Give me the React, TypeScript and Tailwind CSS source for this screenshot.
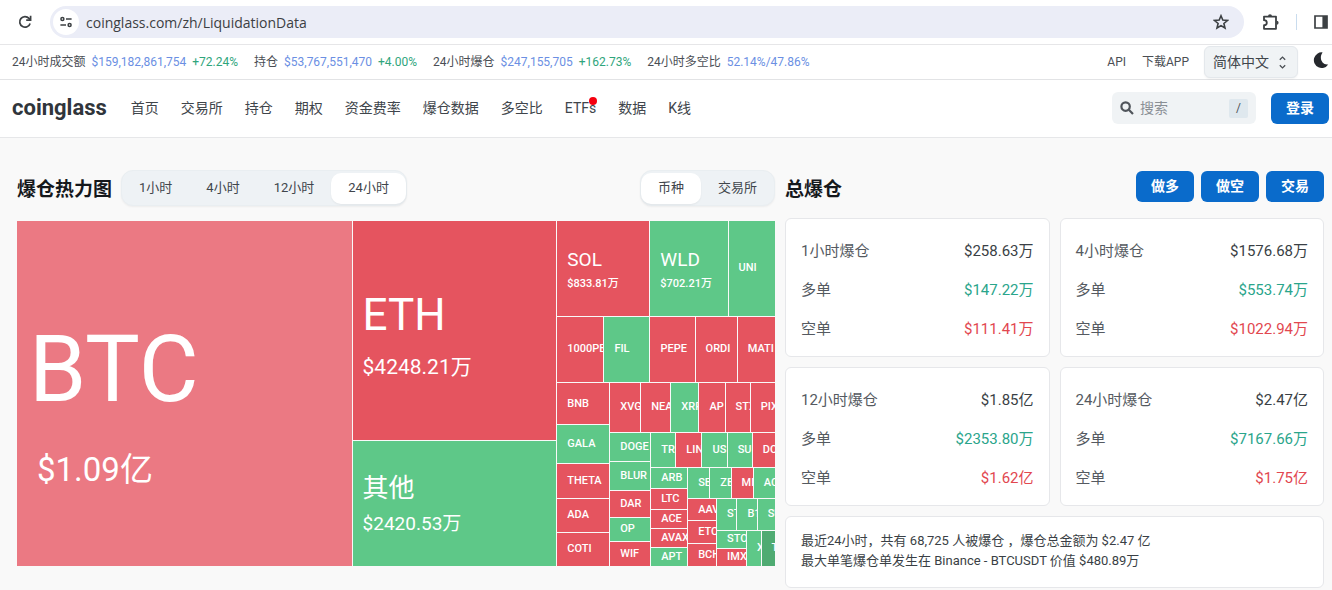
import React from "react";

type Tone = "soft" | "down" | "up" | "deep";
type Scale = "xl" | "lg" | "md" | "sm" | "xs";
type Leaf = { size: number; name: string; tone: Tone; value?: string; scale?: Scale };
type Branch = { size: number; dir: "row" | "col"; items: TreeNode[] };
type TreeNode = Leaf | Branch;

const leaf = (size: number, name: string, tone: Tone, value?: string, scale?: Scale): Leaf => ({
  size,
  name,
  tone,
  value,
  scale,
});
const row = (size: number, ...items: TreeNode[]): Branch => ({ size, dir: "row", items });
const col = (size: number, ...items: TreeNode[]): Branch => ({ size, dir: "col", items });

const heatmap: Branch = row(
  1,
  leaf(335, "BTC", "soft", "$1.09亿", "xl"),
  col(204, leaf(220, "ETH", "down", "$4248.21万", "lg"), leaf(125, "其他", "up", "$2420.53万", "md")),
  col(
    218,
    row(
      95,
      leaf(93, "SOL", "down", "$833.81万", "sm"),
      leaf(78, "WLD", "up", "$702.21万", "sm"),
      leaf(47, "UNI", "up"),
    ),
    row(
      65,
      leaf(47, "1000PE", "down"),
      leaf(46, "FIL", "up"),
      leaf(45, "PEPE", "down"),
      leaf(42, "ORDI", "down"),
      leaf(38, "MATI", "down"),
    ),
    row(
      184,
      col(
        52,
        leaf(43, "BNB", "down"),
        leaf(38, "GALA", "up"),
        leaf(35, "THETA", "down"),
        leaf(34, "ADA", "down"),
        leaf(34, "COTI", "down"),
      ),
      col(
        165,
        row(
          50,
          leaf(31, "XVG", "down"),
          leaf(30, "NEA", "down"),
          leaf(28, "XRP", "up"),
          leaf(26, "AP", "down"),
          leaf(25, "STX", "down"),
          leaf(25, "PIX", "down"),
        ),
        row(
          133,
          col(
            40,
            leaf(29, "DOGE", "up"),
            leaf(29, "BLUR", "up"),
            leaf(26, "DAR", "down"),
            leaf(24, "OP", "up"),
            leaf(25, "WIF", "down"),
          ),
          col(
            124,
            row(
              34,
              leaf(25, "TRB", "up"),
              leaf(26, "LIN", "down"),
              leaf(25, "US", "up"),
              leaf(25, "SU", "up"),
              leaf(23, "DO", "down"),
            ),
            row(
              98,
              col(
                36,
                leaf(21, "ARB", "up"),
                leaf(20, "LTC", "down"),
                leaf(19, "ACE", "down"),
                leaf(19, "AVAX", "down"),
                leaf(19, "APT", "up"),
              ),
              col(
                87,
                row(
                  30,
                  leaf(22, "SE", "up"),
                  leaf(21, "ZE", "up"),
                  leaf(22, "MI", "down"),
                  leaf(22, "AC", "up"),
                ),
                row(
                  67,
                  col(28, leaf(22, "AAV", "down"), leaf(22, "ETC", "down"), leaf(23, "BCH", "down")),
                  col(
                    58,
                    row(31, leaf(20, "ST", "up"), leaf(20, "B1", "up"), leaf(18, "SU", "up")),
                    row(
                      36,
                      col(30, leaf(18, "STO", "up"), leaf(18, "IMX", "down")),
                      leaf(14, "X", "up"),
                      leaf(14, "T", "deep"),
                    ),
                  ),
                ),
              ),
            ),
          ),
        ),
      ),
    ),
  ),
);

const tones: Record<Tone, string> = {
  soft: "bg-[#eb7983]",
  down: "bg-[#e5545f]",
  up: "bg-[#5ec888]",
  deep: "bg-[#4fab72]",
};

const scales: Record<Scale, { name: string; value: string }> = {
  xl: { name: "mt-5 pl-3 text-[92px] leading-[104px]", value: "mt-7 pl-5 text-[33px] leading-10" },
  lg: { name: "mt-2 pl-[10px] text-[44px] leading-[52px]", value: "mt-3 pl-[10px] text-[21px] leading-7" },
  md: { name: "pl-[10px] text-[26px] leading-8", value: "mt-2 pl-[10px] text-[19px] leading-6" },
  sm: {
    name: "mt-1 pl-[10px] text-[19px] leading-6",
    value: "mt-1 pl-[10px] text-[11px] leading-4 font-medium",
  },
  xs: { name: "pl-[10px] text-[11px] leading-4 font-medium", value: "" },
};

function Cell({ node }: { node: TreeNode }) {
  const style = { flexGrow: node.size };
  if ("items" in node) {
    return (
      <div
        style={style}
        className={`flex min-h-0 min-w-0 basis-0 gap-px ${node.dir === "row" ? "flex-row" : "flex-col"}`}
      >
        {node.items.map((child, i) => (
          <Cell key={i} node={child} />
        ))}
      </div>
    );
  }
  const scale = scales[node.scale ?? "xs"];
  return (
    <div
      style={style}
      className={`flex min-h-0 min-w-0 basis-0 flex-col justify-center overflow-hidden whitespace-nowrap text-white ${tones[node.tone]}`}
    >
      <span className={scale.name}>{node.name}</span>
      {node.value && <span className={scale.value}>{node.value}</span>}
    </div>
  );
}

function BrowserBar() {
  return (
    <div className="flex h-[45px] items-center border-b border-[#e6e6e8] pr-1 pl-[18px] text-[#3c4043]">
      <button aria-label="刷新" className="flex">
        <svg width="14" height="14" viewBox="0 0 14 14" fill="none" stroke="currentColor" strokeWidth="1.7">
          <path d="M12.1 8.4A5.3 5.3 0 1 1 11 3.4L12.2 4.8" />
          <path d="M12.6 0.8V5.2H8.2" />
        </svg>
      </button>
      <div className="ml-[18px] flex h-8 flex-1 items-center rounded-full bg-[#ebedf7] pr-[15px] pl-[3px]">
        <button aria-label="网站信息" className="flex size-[26px] items-center justify-center rounded-full bg-white">
          <svg width="12" height="12" viewBox="0 0 12 12" fill="none" stroke="currentColor" strokeWidth="1.5">
            <circle cx="2.4" cy="3" r="1.5" />
            <path d="M6 3H11.6M0.4 9H6" />
            <circle cx="9.6" cy="9" r="1.5" />
          </svg>
        </button>
        <input
          aria-label="网址"
          readOnly
          value="coinglass.com/zh/LiquidationData"
          className="ml-[7px] min-w-0 flex-1 bg-transparent font-['Open_Sans',sans-serif] text-[14px] outline-none"
        />
        <button aria-label="收藏" className="flex">
          <svg width="16" height="16" viewBox="0 0 16 16" fill="none" stroke="currentColor" strokeWidth="1.6">
            <path d="M8 1.8L9.8 6.1L14.4 6.5L10.9 9.5L12 14L8 11.6L4 14L5.1 9.5L1.6 6.5L6.2 6.1Z" />
          </svg>
        </button>
      </div>
      <button aria-label="扩展程序" className="ml-[18px] flex">
        <svg width="18" height="18" viewBox="0 0 18 18" fill="none" stroke="currentColor" strokeWidth="1.8">
          <path d="M2 3.6H14V15.8H2V12.2C3.6 12.2 4.8 11.2 4.8 9.7S3.6 7.2 2 7.2Z" strokeLinejoin="round" />
          <path d="M6 3.2A2 2 0 0 1 10 3.2ZM14.6 7.7A2 2 0 0 1 14.6 11.7Z" fill="currentColor" stroke="none" />
        </svg>
      </button>
      <span className="ml-4 h-4 w-px bg-[#c9dcee]" />
      <button aria-label="侧边栏" className="ml-[17px] flex">
        <svg width="14" height="14" viewBox="0 0 14 14">
          <path d="M1 1H13V13H1Z" fill="none" stroke="currentColor" strokeWidth="1.7" />
          <path d="M8.4 1H13V13H8.4Z" fill="currentColor" />
        </svg>
      </button>
    </div>
  );
}

const stats = [
  { label: "24小时成交额", value: "$159,182,861,754", change: "+72.24%" },
  { label: "持仓", value: "$53,767,551,470", change: "+4.00%" },
  { label: "24小时爆仓", value: "$247,155,705", change: "+162.73%" },
  { label: "24小时多空比", value: "52.14%/47.86%" },
];

function Ticker() {
  return (
    <div className="flex h-[35px] items-center border-b border-[#e2e3e5] pr-[3px] pl-3 text-[12px] text-[#4a4e54]">
      <dl className="flex gap-4">
        {stats.map((s) => (
          <div key={s.label} className="flex gap-[6px]">
            <dt>{s.label}</dt>
            <dd className="text-[#6b8fe3]">{s.value}</dd>
            {s.change && <dd className="text-[#2fa57c]">{s.change}</dd>}
          </div>
        ))}
      </dl>
      <a href="#api" className="ml-auto">
        API
      </a>
      <a href="#app" className="ml-4">
        下载APP
      </a>
      <div className="relative ml-[15px]">
        <select
          aria-label="语言"
          className="h-8 w-[94px] appearance-none rounded-md border border-[#e4e8ec] bg-[#f0f3f5] pl-2 text-[14px] text-[#40454b] shadow-xs"
        >
          <option>简体中文</option>
        </select>
        <svg
          className="pointer-events-none absolute top-[10px] right-3"
          width="7"
          height="13"
          viewBox="0 0 7 13"
          fill="none"
          stroke="#4a4e54"
          strokeWidth="1.3"
        >
          <path d="M0.8 3.8L3.5 1.1L6.2 3.8M0.8 9.2L3.5 11.9L6.2 9.2" />
        </svg>
      </div>
      <button aria-label="深色模式" className="mb-1 ml-[15px] flex text-[#25282d]">
        <svg width="16" height="16" viewBox="0 0 16 16" fill="currentColor">
          <path d="M9.6 0.4A7.8 7.8 0 1 0 15.2 12.4C9.4 13.4 5.4 6.2 9.6 0.4Z" />
        </svg>
      </button>
    </div>
  );
}

const links = ["首页", "交易所", "持仓", "期权", "资金费率", "爆仓数据", "多空比", "ETFs", "数据", "K线"];

function Header() {
  return (
    <header className="flex h-[58px] items-center border-b border-[#e6e7e9] pr-[3px] pb-px pl-3">
      <a href="#home" className="text-[22px] leading-8 font-bold text-[#30353b]">
        coinglass
      </a>
      <nav className="ml-6 flex gap-[22px] text-[14px] text-[#40454b]">
        {links.map((l) => (
          <a key={l} href={`#${l}`} className="relative">
            {l}
            {l === "ETFs" && <span className="absolute -top-px -right-px size-2 rounded-full bg-[#f5000f]" />}
          </a>
        ))}
      </nav>
      <label className="ml-auto flex h-8 w-36 items-center rounded-md bg-[#f0f3f5] pr-2 pl-2">
        <svg width="14" height="14" viewBox="0 0 14 14" fill="none" stroke="#50555b" strokeWidth="2.2">
          <circle cx="5.6" cy="5.6" r="4.2" />
          <path d="M8.8 8.8L13 13" />
        </svg>
        <input
          type="search"
          aria-label="搜索"
          placeholder="搜索"
          className="ml-[6px] min-w-0 flex-1 bg-transparent text-[14px] outline-none placeholder:text-[#8a8f95]"
        />
        <kbd className="flex h-[19px] w-[19px] items-center justify-center rounded-xs bg-[#dfe8ee] font-[Roboto] text-[12px] text-[#50555b]">
          /
        </kbd>
      </label>
      <button className="ml-[15px] h-[31px] rounded-md bg-[#0a6bcb] px-[15px] text-[14px] font-bold text-white">
        登录
      </button>
    </header>
  );
}

function Segments({ items, active, label }: { items: string[]; active: string; label: string }) {
  return (
    <div
      role="group"
      aria-label={label}
      className="flex h-9 items-center rounded-xl border border-[#e9eef1] bg-[#eef2f5] text-[13px] text-[#40454b] shadow-xs"
    >
      {items.map((t) => (
        <button
          key={t}
          aria-pressed={t === active}
          className={`h-[31px] px-[17px] ${t === active ? "rounded-[10px] bg-white shadow-xs" : ""}`}
        >
          {t}
        </button>
      ))}
    </div>
  );
}

const cards = [
  { title: "1小时爆仓", total: "$258.63万", long: "$147.22万", short: "$111.41万" },
  { title: "4小时爆仓", total: "$1576.68万", long: "$553.74万", short: "$1022.94万" },
  { title: "12小时爆仓", total: "$1.85亿", long: "$2353.80万", short: "$1.62亿" },
  { title: "24小时爆仓", total: "$2.47亿", long: "$7167.66万", short: "$1.75亿" },
];

function Line({ label, value, tone }: { label: string; value: string; tone: string }) {
  return (
    <div className="flex justify-between">
      <dt className="text-[#555a61]">{label}</dt>
      <dd className={tone}>{value}</dd>
    </div>
  );
}

export default function App() {
  return (
    <div className="min-h-screen overflow-hidden bg-white font-[Roboto,'Noto_Sans_CJK_SC',sans-serif]">
      <BrowserBar />
      <Ticker />
      <Header />
      <main className="grid grid-cols-[758fr_539fr] gap-[10px] bg-[#f9f9f9] pt-8 pr-2 pb-[3px] pl-[17px]">
        <section className="min-w-0">
          <div className="mb-[15px] flex h-9 items-center">
            <h2 className="mr-[9px] pt-1 text-[19px] font-bold text-[#15181c]">爆仓热力图</h2>
            <Segments label="时间" items={["1小时", "4小时", "12小时", "24小时"]} active="24小时" />
            <div className="ml-auto">
              <Segments label="类型" items={["币种", "交易所"]} active="币种" />
            </div>
          </div>
          <div className="flex h-[345px]">
            <Cell node={heatmap} />
          </div>
        </section>
        <section className="min-w-0">
          <div className="mb-3 flex h-9 items-center gap-[7px]">
            <h2 className="mr-auto pt-1 text-[19px] font-bold text-[#15181c]">总爆仓</h2>
            {["做多", "做空", "交易"].map((t) => (
              <button
                key={t}
                className="mb-[3px] h-[31px] rounded-md bg-[#0a6bcb] px-[15px] text-[14px] font-bold text-white"
              >
                {t}
              </button>
            ))}
          </div>
          <div className="grid grid-cols-2 gap-[10px]">
            {cards.map((c) => (
              <dl
                key={c.title}
                className="flex flex-col gap-[15px] rounded-md border border-[#e6e7ea] bg-white px-[15px] pt-5 pb-[15px] text-[15px] leading-6"
              >
                <Line label={c.title} value={c.total} tone="text-[#3a3f45]" />
                <Line label="多单" value={c.long} tone="text-[#2aa58b]" />
                <Line label="空单" value={c.short} tone="text-[#e2474f]" />
              </dl>
            ))}
            <p className="col-span-2 rounded-md border border-[#e6e7ea] bg-white px-[15px] pt-[14px] pb-4 text-[13px] leading-5 text-[#3a3f45]">
              最近24小时，共有 68,725 人被爆仓 ，爆仓总金额为 $2.47 亿
              <br />
              最大单笔爆仓单发生在 Binance - BTCUSDT 价值 $480.89万
            </p>
          </div>
        </section>
      </main>
    </div>
  );
}
